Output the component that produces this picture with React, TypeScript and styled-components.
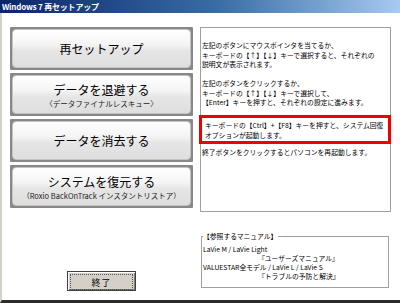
import { createGlobalStyle, styled } from 'styled-components';

const GlobalStyle = createGlobalStyle`
    html, body {
        margin: 0;
        padding: 0;
        background: #ffffff;
    }

    body {
        width: 400px;
        height: 303px;
        overflow: hidden;
        font-family: "Noto Sans CJK JP", "Noto Sans", sans-serif;
    }
`;

const Window = styled.div`
    width: 400px;
    height: 303px;
    display: flex;
    flex-direction: column;
    background: #ffffff;
    box-sizing: border-box;
`;

const TitleBar = styled.div`
    height: 13px;
    flex: 0 0 13px;
    padding-left: 2px;
    background: linear-gradient(to right, #0a246a 0%, #3a6ea5 55%, #a6caf0 100%);
    color: #ffffff;
    font-size: 8px;
    font-weight: bold;
    line-height: 13px;
    letter-spacing: -0.2px;
    white-space: nowrap;
`;

const Body = styled.div`
    flex: 1;
    display: grid;
    grid-template-columns: 183px 191px;
    column-gap: 7px;
    align-items: start;
    padding: 14px 0 0 8px;
    border-left: 2px solid #d4d0c8;
    border-bottom: 3px solid #2b2b2b;
`;

const LeftColumn = styled.div`
    display: flex;
    flex-direction: column;
    gap: 3px;
`;

const ChoiceFrame = styled.div`
    height: 43px;
    padding: 2px;
    box-sizing: border-box;
    background: #888888;
    border-radius: 1px;
`;

const ChoiceFace = styled.div`
    height: 100%;
    box-sizing: border-box;
    border: 1px solid #c4c4c4;
    border-radius: 4px;
    background: linear-gradient(#ffffff 0%, #f4f4f4 40%, #e6e6e6 55%, #dedede 100%);
    display: flex;
    flex-direction: column;
    align-items: center;
    justify-content: center;
    color: #000000;
`;

const ChoiceTitle = styled.span`
    font-size: 12px;
    line-height: 17px;
`;

const ChoiceSub = styled.span`
    font-size: 7.5px;
    line-height: 11px;
    color: #222222;
`;

const EndButton = styled.button`
    align-self: center;
    margin-top: 60px;
    width: 69px;
    height: 20px;
    padding: 2px;
    box-sizing: border-box;
    background: #d4d0c8;
    border: 1px solid #404040;
    box-shadow: inset 1px 1px 0 #ffffff, inset -1px -1px 0 #808080;
    font-family: inherit;
    cursor: pointer;
`;

const FocusRing = styled.span`
    display: flex;
    align-items: center;
    justify-content: center;
    height: 100%;
    border: 1px dotted #555555;
    font-size: 9px;
    letter-spacing: 1px;
    color: #000000;
`;

const RightColumn = styled.div`
    display: flex;
    flex-direction: column;
`;

const InfoBox = styled.div`
    height: 185px;
    box-sizing: border-box;
    border: 1px solid #a0a0a0;
    padding: 13px 0 0 1px;
    font-size: 6.8px;
    line-height: 9.5px;
    color: #000000;
    white-space: nowrap;
`;

const Para = styled.div<{ $gap?: number }>`
    margin-top: ${props => props.$gap ?? 0}px;
`;

const Highlight = styled.div`
    margin: 7px -1px 0 -3px;
    padding: 2px 0 1px 3px;
    border: 3px solid #ee0000;
    line-height: 10px;
`;

const Manual = styled.fieldset`
    margin: 20px 2px 0 1px;
    padding: 3px 2px 6px 1px;
    border: 1px solid #a0a0a0;
    min-width: 0;
    font-size: 6.8px;
    line-height: 9px;
    color: #000000;
    white-space: nowrap;
`;

const ManualLegend = styled.legend`
    padding: 0 1px 0 0;
    font-size: 6.8px;
    line-height: 9.5px;
`;

const Indent = styled.div`
    padding-left: 55px;
`;

const choices = [
    { title: '再セットアップ' },
    { title: 'データを退避する', sub: '〈データファイナルレスキュー〉' },
    { title: 'データを消去する' },
    { title: 'システムを復元する', sub: '（Roxio BackOnTrack インスタントリストア）' },
];

export default function App() {
    return (
        <>
            <GlobalStyle />
            <Window>
                <TitleBar>Windows 7 再セットアップ</TitleBar>
                <Body>
                    <LeftColumn>
                        {choices.map(choice => (
                            <ChoiceFrame key={choice.title}>
                                <ChoiceFace>
                                    <ChoiceTitle>{choice.title}</ChoiceTitle>
                                    {choice.sub ? <ChoiceSub>{choice.sub}</ChoiceSub> : null}
                                </ChoiceFace>
                            </ChoiceFrame>
                        ))}
                        <EndButton>
                            <FocusRing>終了</FocusRing>
                        </EndButton>
                    </LeftColumn>
                    <RightColumn>
                        <InfoBox>
                            <Para>
                                左記のボタンにマウスポインタを当てるか、<br />
                                キーボードの【↑】【↓】キーで選択すると、それぞれの<br />
                                説明文が表示されます。
                            </Para>
                            <Para $gap={9.5}>
                                左記のボタンをクリックするか、<br />
                                キーボードの【↑】【↓】キーで選択して、<br />
                                【Enter】キーを押すと、それぞれの設定に進みます。
                            </Para>
                            <Highlight>
                                キーボードの【Ctrl】+【F8】キーを押すと、システム回復<br />
                                オプションが起動します。
                            </Highlight>
                            <Para $gap={4}>
                                終了ボタンをクリックするとパソコンを再起動します。
                            </Para>
                        </InfoBox>
                        <Manual>
                            <ManualLegend>【参照するマニュアル】</ManualLegend>
                            <div>LaVie M / LaVie Light</div>
                            <Indent>『ユーザーズマニュアル』</Indent>
                            <div>VALUESTAR全モデル / LaVie L / LaVie S</div>
                            <Indent>『トラブルの予防と解決』</Indent>
                        </Manual>
                    </RightColumn>
                </Body>
            </Window>
        </>
    );
}
